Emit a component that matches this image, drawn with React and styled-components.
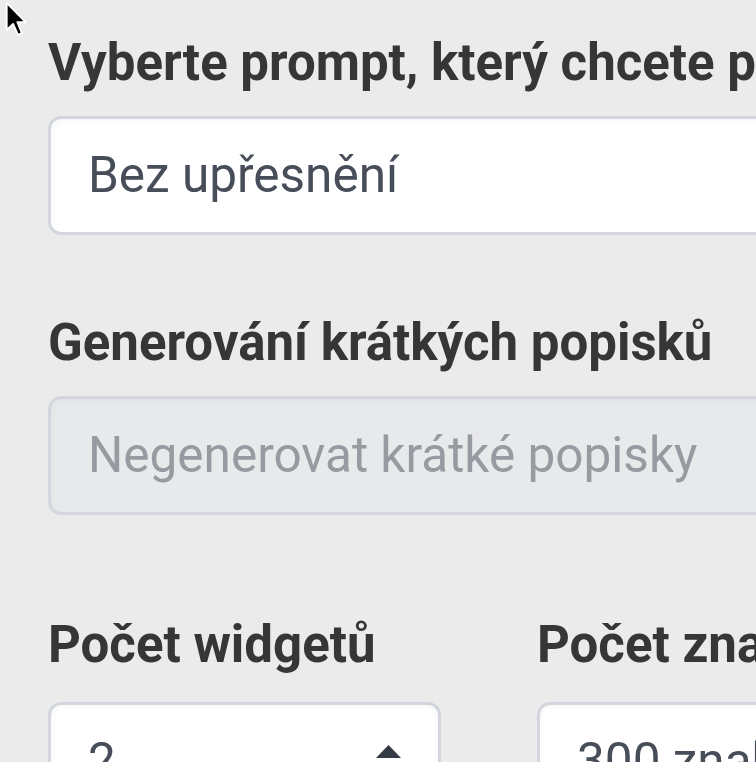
import React from 'react';
import styled, { createGlobalStyle } from 'styled-components';

const GlobalStyle = createGlobalStyle`
  html, body {
    margin: 0;
    padding: 0;
    background: #ebebeb;
    overflow: hidden;
  }
  body {
    font-family: Roboto, "Liberation Sans", Arial, sans-serif;
  }
`

const Page = styled.div`
  position: relative;
  width: 756px;
  height: 762px;
  overflow: hidden;
  background: #ebebeb;
`

const Form = styled.form`
  width: 882px;
  padding: 27px 0 0 48px;
  display: flex;
  flex-direction: column;
`

const Field = styled.div`
  display: flex;
  flex-direction: column;
  gap: ${props => props.gap || 17}px;
  margin-bottom: ${props => props.spacing || 0}px;
`

const Label = styled.label`
  font-size: 51px;
  line-height: 72px;
  font-weight: 700;
  color: #363636;
  white-space: nowrap;
`

const Control = styled.div`
  box-sizing: border-box;
  display: flex;
  align-items: center;
  justify-content: space-between;
  height: 119px;
  padding: 20px 37px 20px 37px;
  border: 3px solid #d3d7dd;
  border-radius: 13px;
  background: ${props => (props.disabled ? '#e8e9eb' : '#ffffff')};
  box-shadow: inset 0 2px 6px rgba(0, 0, 0, 0.04);
  font-size: 49.5px;
  line-height: 73px;
  color: ${props => (props.disabled ? '#979ba1' : '#474e59')};
  white-space: nowrap;
  overflow: hidden;
`

const Row = styled.div`
  display: grid;
  grid-template-columns: 1fr 1fr;
  column-gap: 96px;
`

const Arrows = styled.svg`
  flex: none;
  align-self: flex-start;
  width: 25px;
  height: 48px;
  margin-top: 20px;
`

const Cursor = styled.svg`
  position: absolute;
  top: 1px;
  left: 5px;
  width: 22px;
  height: 36px;
`

function SelectArrows() {
  return (
    <Arrows viewBox="0 0 25 48">
      <path d="M12.5 0 L25 13 L0 13 Z" fill="#333a44" />
      <path d="M12.5 48 L25 35 L0 35 Z" fill="#333a44" />
    </Arrows>
  )
}

export default function App() {
  return (
    <Page>
      <GlobalStyle />
      <Form>
        <Field spacing={72}>
          <Label>Vyberte prompt, který chcete použít</Label>
          <Control>Bez upřesnění</Control>
        </Field>
        <Field spacing={94}>
          <Label>Generování krátkých popisků</Label>
          <Control disabled>Negenerovat krátké popisky</Control>
        </Field>
        <Row>
          <Field gap={21}>
            <Label>Počet widgetů</Label>
            <Control>
              <span>2</span>
              <SelectArrows />
            </Control>
          </Field>
          <Field gap={21}>
            <Label>Počet znaků</Label>
            <Control>
              <span>300 znaků</span>
              <SelectArrows />
            </Control>
          </Field>
        </Row>
      </Form>
      <Cursor viewBox="0 0 13 21">
        <path
          d="M1 1 L1 17 L4.8 13.4 L7.6 19.8 L10 18.8 L7.3 12.4 L12.2 12.4 Z"
          fill="#000"
          stroke="#fff"
          strokeWidth="1.1"
          strokeLinejoin="round"
        />
      </Cursor>
    </Page>
  )
}
